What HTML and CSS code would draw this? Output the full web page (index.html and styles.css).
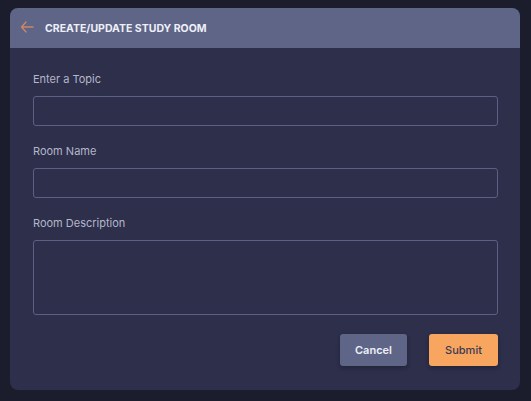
FILE: index.html
```html
<!DOCTYPE html>
<html>
<head>
<meta charset="utf-8">
<link rel="stylesheet" href="styles.css">
</head>
<body>
<div class="card">
  <div class="card-header">
    <svg class="back" width="14" height="12" viewBox="0 0 14 12"><path d="M6 1 L1.5 6 L6 11 M1.5 6 H13" fill="none" stroke="#c9876a" stroke-width="1.4" stroke-linecap="round" stroke-linejoin="round"/></svg>
    <h1 class="title">CREATE/UPDATE STUDY ROOM</h1>
  </div>
  <form class="form">
    <div class="group">
      <label class="label">Enter a Topic</label>
      <input class="input" type="text">
    </div>
    <div class="group">
      <label class="label">Room Name</label>
      <input class="input" type="text">
    </div>
    <div class="group">
      <label class="label">Room Description</label>
      <textarea class="input textarea"></textarea>
    </div>
    <div class="actions">
      <button type="button" class="btn btn-cancel">Cancel</button>
      <button type="button" class="btn btn-submit">Submit</button>
    </div>
  </form>
</div>
</body>
</html>
```

FILE: styles.css
```css
html, body {
  margin: 0;
  background: #1b1c2c;
}
body {
  padding: 8px 11px 0 10px;
  font-family: Inter, "Noto Sans", sans-serif;
}
.card {
  width: 510px;
  height: 382px;
  background: #2d2f4b;
  border-radius: 8px;
  overflow: hidden;
  box-sizing: border-box;
  display: flex;
  flex-direction: column;
}
.card-header {
  height: 40px;
  background: #5e6587;
  display: flex;
  align-items: center;
  padding-left: 10px;
  gap: 11px;
}
.back {
  display: block;
  margin-top: -3px;
}
.title {
  margin: 0;
  font-size: 10.5px;
  font-weight: 700;
  color: #eef0f8;
  letter-spacing: 0;
}
.form {
  padding: 23px 22px 0 23px;
  display: flex;
  flex-direction: column;
}
.group {
  display: flex;
  flex-direction: column;
  margin-bottom: 17px;
}
.label {
  font-size: 11px;
  line-height: 16px;
  color: #b4b7ca;
  margin-bottom: 9px;
}
.input {
  height: 30px;
  box-sizing: border-box;
  background: transparent;
  border: 1px solid #5c6082;
  border-radius: 3px;
  margin: 0;
  outline: none;
}
.textarea {
  height: 75px;
  resize: none;
}
.actions {
  display: flex;
  justify-content: flex-end;
  gap: 22px;
  margin-top: 2px;
}
.btn {
  height: 32px;
  border: none;
  border-radius: 3px;
  font-family: Inter, "Noto Sans", sans-serif;
  font-size: 11px;
  box-shadow: 0 2px 4px rgba(0,0,0,0.25);
  padding: 0;
}
.btn-cancel {
  width: 67px;
  background: #5e6587;
  color: #eef0f8;
  font-weight: 600;
}
.btn-submit {
  width: 69px;
  background: #f8a55f;
  color: #3a3b52;
  font-weight: 500;
}
```
